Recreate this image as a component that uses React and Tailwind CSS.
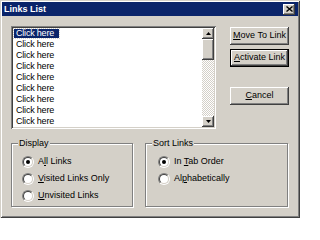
import React from 'react';

const font = { fontFamily: '"Liberation Sans", Arial, sans-serif' };

const raised =
  'shadow-[inset_-1px_-1px_#404040,inset_1px_1px_#fff,inset_-2px_-2px_#808080,inset_2px_2px_#d4d0c8]';
const sunken =
  'shadow-[inset_1px_1px_#808080,inset_-1px_-1px_#fff,inset_2px_2px_#404040,inset_-2px_-2px_#d4d0c8]';

function Radio({ checked }) {
  return (
    <span className="flex w-[12px] h-[12px] rounded-full border border-t-[#808080] border-l-[#808080] border-b-white border-r-white shrink-0">
      <span className="flex w-full h-full rounded-full border border-t-[#404040] border-l-[#404040] border-b-[#d4d0c8] border-r-[#d4d0c8] bg-white items-center justify-center">
        {checked && <span className="w-[4px] h-[4px] rounded-full bg-black" />}
      </span>
    </span>
  );
}

function Option({ checked, children }) {
  return (
    <div className="flex items-center h-[17px] gap-[4px]">
      <Radio checked={checked} />
      <span className="text-[9px] leading-[11px] text-black">{children}</span>
    </div>
  );
}

function Button({ children, isDefault }) {
  return (
    <div className={`h-[18px] w-[59px] ${isDefault ? 'border border-black' : ''}`}>
      <div className={`h-full w-full flex items-center justify-center bg-[#d4d0c8] ${raised} text-[9px] text-black`}>
        {children}
      </div>
    </div>
  );
}

function Arrow({ down }) {
  return (
    <div className={`h-[11px] w-[12px] bg-[#d4d0c8] ${raised} flex items-center justify-center`}>
      <svg width="5" height="3" viewBox="0 0 5 3">
        {down ? <path d="M0 0h5L2.5 3z" fill="#000" /> : <path d="M0 3h5L2.5 0z" fill="#000" />}
      </svg>
    </div>
  );
}

export default function App() {
  const rows = Array.from({ length: 9 }, (_, i) => i);
  return (
    <div
      style={font}
      className="w-[300px] h-[218px] bg-[#d4d0c8] p-[2px] flex flex-col shadow-[inset_1px_1px_#d4d0c8,inset_-1px_-1px_#404040,inset_2px_2px_#fff,inset_-2px_-2px_#808080] overflow-hidden"
    >
      {/* title bar */}
      <div className="h-[14px] bg-[#0a246a] flex items-center justify-between pl-[2px] pr-[3px]">
        <span className="text-white font-bold text-[9px] leading-[14px]">Links List</span>
        <div className={`w-[12px] h-[11px] bg-[#d4d0c8] ${raised} flex items-center justify-center`}>
          <svg width="7" height="6" viewBox="0 0 7 6">
            <path d="M0.5 0.5l6 5M6.5 0.5l-6 5" stroke="#000" strokeWidth="1.4" />
          </svg>
        </div>
      </div>

      {/* list + buttons */}
      <div className="flex mt-[10px] pl-[9px]">
        <div className={`w-[205px] h-[103px] bg-white ${sunken} p-[2px] flex`}>
          <div className="flex-1 flex flex-col pl-[1px]">
            {rows.map((i) => (
              <div key={i} className="h-[11px] flex items-center">
                <span
                  className={`text-[9px] leading-[9px] h-[9px] w-[45px] pl-[2px] tracking-[-0.2px] ${
                    i === 0 ? 'bg-[#0a246a] text-white outline outline-1 outline-dotted outline-[#d4d0c8]' : 'text-black'
                  }`}
                >
                  Click here
                </span>
              </div>
            ))}
          </div>
          <div className="w-[12px] flex flex-col bg-[repeating-conic-gradient(#fff_0_25%,#d4d0c8_0_50%)] bg-[length:2px_2px]">
            <Arrow />
            <div className={`h-[21px] w-[12px] bg-[#d4d0c8] ${raised}`} />
            <div className="flex-1" />
            <Arrow down />
          </div>
        </div>

        <div className="ml-[14px] mt-[1px] flex flex-col">
          <Button>
            <span className="underline">M</span>ove To Link
          </Button>
          <div className="mt-[4px]">
            <Button isDefault>
              <span className="underline">A</span>ctivate Link
            </Button>
          </div>
          <div className="mt-[20px]">
            <Button>
              <span className="underline">C</span>ancel
            </Button>
          </div>
        </div>
      </div>

      {/* group boxes */}
      <div className="flex mt-[14px] pl-[9px]">
        <div className="relative w-[122px] h-[64px] border border-[#808080] shadow-[inset_1px_1px_#fff,1px_1px_#fff] pl-[10px] pt-[9px]">
          <span className="absolute -top-[6px] left-[6px] bg-[#d4d0c8] px-[1px] text-[9px] leading-[11px] text-black">
            Display
          </span>
          <Option checked>
            A<span className="underline">l</span>l Links
          </Option>
          <Option>
            <span className="underline">V</span>isited Links Only
          </Option>
          <Option>
            <span className="underline">U</span>nvisited Links
          </Option>
        </div>
        <div className="relative ml-[12px] w-[143px] h-[64px] border border-[#808080] shadow-[inset_1px_1px_#fff,1px_1px_#fff] pl-[12px] pt-[9px]">
          <span className="absolute -top-[6px] left-[6px] bg-[#d4d0c8] px-[1px] text-[9px] leading-[11px] text-black">
            Sort Links
          </span>
          <Option checked>
            In <span className="underline">T</span>ab Order
          </Option>
          <Option>
            Al<span className="underline">p</span>habetically
          </Option>
        </div>
      </div>
    </div>
  );
}
